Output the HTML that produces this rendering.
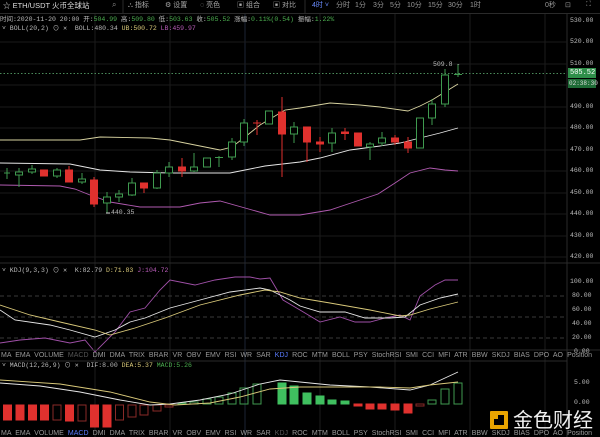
<!DOCTYPE html>
<html><head><meta charset="utf-8"><style>
html,body{margin:0;padding:0;background:#000;}
#w{position:relative;width:600px;height:437px;overflow:hidden;background:#000;font-family:"Liberation Sans","Noto Sans CJK SC",sans-serif;color:#bbb;}
.t{position:absolute;white-space:nowrap;font-size:7px;line-height:8px;}
.m{font-family:"Liberation Mono","Noto Sans CJK SC",monospace;font-size:6.5px;}
svg{position:absolute;left:0;top:0;}
</style></head><body><div id="w">
<svg width="600" height="437" viewBox="0 0 600 437">
<line x1="0" y1="13.5" x2="600" y2="13.5" stroke="#2a2a2a"/>
<line x1="123" y1="0" x2="123" y2="13" stroke="#2a2a2a"/>
<line x1="305" y1="0" x2="305" y2="13" stroke="#2a2a2a"/>
<g stroke="#1c1c1c">
<line x1="95" y1="14" x2="95" y2="437"/><line x1="170" y1="14" x2="170" y2="437"/>
<line x1="245" y1="14" x2="245" y2="437" stroke="#1c2433"/><line x1="320" y1="14" x2="320" y2="437"/>
<line x1="395" y1="14" x2="395" y2="437"/><line x1="470" y1="14" x2="470" y2="437"/>
<line x1="545" y1="14" x2="545" y2="437"/>
<line x1="567" y1="14" x2="567" y2="437" stroke="#2a2a2a"/>
</g>
<g stroke="#1a1a1a">
<line x1="0" y1="42" x2="567" y2="42"/><line x1="0" y1="64" x2="567" y2="64"/><line x1="0" y1="85" x2="567" y2="85"/>
<line x1="0" y1="107" x2="567" y2="107"/><line x1="0" y1="128" x2="567" y2="128"/><line x1="0" y1="150" x2="567" y2="150"/>
<line x1="0" y1="171" x2="567" y2="171"/><line x1="0" y1="193" x2="567" y2="193"/><line x1="0" y1="214" x2="567" y2="214"/>
<line x1="0" y1="236" x2="567" y2="236"/><line x1="0" y1="257" x2="567" y2="257"/>
</g>
<line x1="0" y1="263" x2="600" y2="263" stroke="#2a2a2a"/>
<line x1="0" y1="73.5" x2="567" y2="73.5" stroke="#4a8a5a" stroke-dasharray="1.5,2"/>
<polyline fill="none" stroke="#d8d3a0" stroke-width="0.9" points="0,140 80,140 100,137 150,138 170,140 200,146 220,150 232,147 245,137 260,125 285,110 300,108 330,103 360,105 380,107 408,111 420,106 432,100 445,92 458,84"/>
<polyline fill="none" stroke="#e6e6e6" stroke-width="0.9" points="0,163 70,164 100,170 130,172 170,173 230,173 245,170 265,166 300,162 320,158 350,150 380,146 400,143 420,138 440,133 458,128"/>
<polyline fill="none" stroke="#b05ab0" stroke-width="0.9" points="0,185 60,186 75,189 90,195 110,202 140,207 180,207 200,203 220,201 245,208 270,215 300,215 330,210 345,205 360,200 378,194 395,183 410,173 430,168 445,170 458,171"/>
<g stroke="#3f9a4f" stroke-width="1" fill="#000">
<line x1="7" y1="168" x2="7" y2="179"/><line x1="4" y1="173" x2="10" y2="173"/>
<line x1="19" y1="168" x2="19" y2="187"/><rect x="15.5" y="172" width="7" height="3"/>
<line x1="32" y1="165" x2="32" y2="174"/><rect x="28.5" y="169" width="7" height="3"/>
<line x1="57" y1="168" x2="57" y2="178"/><rect x="53.5" y="170" width="7" height="6"/>
<line x1="82" y1="173" x2="82" y2="184"/><rect x="78.5" y="179" width="7" height="3"/>
<line x1="107" y1="192" x2="107" y2="213"/><rect x="103.5" y="197" width="7" height="6"/>
<line x1="119" y1="190" x2="119" y2="202"/><rect x="115.5" y="194" width="7" height="3"/>
<line x1="132" y1="178" x2="132" y2="196"/><rect x="128.5" y="183" width="7" height="12"/>
<line x1="157" y1="170" x2="157" y2="189"/><rect x="153.5" y="173" width="7" height="15"/>
<line x1="169" y1="162" x2="169" y2="177"/><rect x="165.5" y="167" width="7" height="6"/>
<line x1="194" y1="153" x2="194" y2="172"/><rect x="190.5" y="167" width="7" height="4"/>
<rect x="203.5" y="158" width="7" height="9"/>
<line x1="219" y1="156" x2="219" y2="167"/><line x1="215" y1="157.5" x2="223" y2="157.5"/>
<line x1="232" y1="138" x2="232" y2="160"/><rect x="228.5" y="142" width="7" height="15"/>
<line x1="244" y1="119" x2="244" y2="146"/><rect x="240.5" y="123" width="7" height="19"/>
<rect x="265.5" y="111" width="7" height="13"/>
<line x1="294" y1="122" x2="294" y2="143"/><rect x="290.5" y="127" width="7" height="7"/>
<line x1="332" y1="128" x2="332" y2="152"/><rect x="328.5" y="133" width="7" height="10"/>
<line x1="370" y1="142" x2="370" y2="160"/><rect x="366.5" y="144" width="7" height="3"/>
<line x1="382" y1="132" x2="382" y2="146"/><rect x="378.5" y="138" width="7" height="5"/>
<rect x="416.5" y="118" width="7" height="30"/>
<line x1="432" y1="99" x2="432" y2="125"/><rect x="428.5" y="104" width="7" height="14"/>
<line x1="445" y1="69" x2="445" y2="107"/><rect x="441.5" y="75" width="7" height="29"/>
<line x1="458" y1="64" x2="458" y2="77"/><line x1="454" y1="74.5" x2="462" y2="74.5"/>
</g>
<g stroke="#e0312e" fill="#e0312e">
<rect x="40.5" y="170" width="7" height="6"/>
<line x1="69" y1="166" x2="69" y2="182"/><rect x="65.5" y="170" width="7" height="12"/>
<line x1="94" y1="177" x2="94" y2="207"/><rect x="90.5" y="180" width="7" height="24"/>
<line x1="144" y1="183" x2="144" y2="193"/><rect x="140.5" y="183" width="7" height="5"/>
<line x1="182" y1="158" x2="182" y2="177"/><rect x="178.5" y="167" width="7" height="4"/>
<line x1="257" y1="120" x2="257" y2="135"/><line x1="253" y1="123" x2="261" y2="123"/>
<line x1="282" y1="97" x2="282" y2="177"/><rect x="278.5" y="112" width="7" height="22"/>
<line x1="307" y1="127" x2="307" y2="162"/><rect x="303.5" y="127" width="7" height="15"/>
<line x1="320" y1="137" x2="320" y2="152"/><rect x="316.5" y="142" width="7" height="2"/>
<line x1="345" y1="128" x2="345" y2="140"/><rect x="341.5" y="132" width="7" height="1.5"/>
<rect x="354.5" y="133" width="7" height="13"/>
<line x1="395" y1="135" x2="395" y2="145"/><rect x="391.5" y="138" width="7" height="4"/>
<line x1="408" y1="137" x2="408" y2="153"/><rect x="404.5" y="142" width="7" height="6"/>
</g>
<line x1="106" y1="213" x2="110" y2="213" stroke="#ccc"/>
<g stroke="#3a3a3a" stroke-dasharray="4,3">
<line x1="0" y1="296" x2="567" y2="296"/><line x1="0" y1="317" x2="567" y2="317"/><line x1="0" y1="338" x2="567" y2="338"/>
</g>
<polyline fill="none" stroke="#a050a8" stroke-width="0.9" points="0,343 20,340 45,338 70,343 85,340 95,352 115,332 130,312 145,308 160,290 170,280 195,285 215,280 235,277 250,277 260,279 270,278 283,300 300,310 320,322 340,317 355,322 370,322 385,318 400,315 410,320 420,296 435,285 445,280 458,280"/>
<polyline fill="none" stroke="#e6e6e6" stroke-width="0.9" points="0,310 15,320 50,325 70,330 95,337 115,330 130,322 145,318 170,308 200,300 230,292 260,288 270,290 290,300 300,306 320,312 345,312 365,318 390,318 405,317 420,305 440,298 458,294"/>
<polyline fill="none" stroke="#d9c97a" stroke-width="0.9" points="0,305 30,315 60,322 95,330 110,335 135,328 165,318 200,305 240,295 265,290 280,292 300,298 330,303 370,310 400,316 410,315 430,309 458,302"/>
<line x1="0" y1="350" x2="600" y2="350" stroke="#2a2a2a"/>
<line x1="0" y1="361" x2="567" y2="361" stroke="#2a2a2a"/>
<g fill="#e0312e" stroke="#e0312e">
<rect x="3.5" y="405" width="8" height="15"/><rect x="28.5" y="405" width="8" height="15"/>
<rect x="16" y="405" width="8" height="15"/><rect x="40.5" y="405" width="8" height="15"/>
<rect x="65.5" y="405" width="8" height="16"/><rect x="90.5" y="405" width="8" height="22"/><rect x="103" y="405" width="8" height="22"/>
<rect x="354" y="404" width="8" height="2"/><rect x="366" y="404" width="8" height="5"/><rect x="378" y="404" width="8" height="5"/><rect x="391" y="404" width="8" height="6"/><rect x="404" y="404" width="8" height="9"/>
</g>
<g fill="none" stroke="#8a2a28">
<rect x="53" y="405" width="8" height="15"/><rect x="78" y="405" width="8" height="16"/>
<rect x="115.5" y="405" width="8" height="15"/><rect x="128" y="405" width="8" height="12"/><rect x="140" y="405" width="8" height="10"/><rect x="153" y="405" width="8" height="6"/><rect x="165" y="405" width="8" height="2"/>
<rect x="416" y="404" width="8" height="2"/>
</g>
<g fill="none" stroke="#3f9a4f">
<rect x="178" y="403" width="8" height="1"/><rect x="190" y="402" width="8" height="2"/><rect x="203" y="399" width="8" height="5"/><rect x="215" y="397" width="8" height="7"/><rect x="228" y="393" width="8" height="11"/><rect x="240" y="388" width="8" height="16"/><rect x="253" y="384" width="8" height="20"/>
<rect x="428" y="400" width="8" height="4"/><rect x="441" y="389" width="8" height="15"/><rect x="454" y="383" width="8" height="21"/>
</g>
<g fill="#3fbf5f" stroke="#3fbf5f">
<rect x="278" y="383" width="8" height="21"/><rect x="290" y="386" width="8" height="18"/><rect x="303" y="393" width="8" height="11"/><rect x="316" y="396" width="8" height="8"/><rect x="328" y="400" width="8" height="4"/><rect x="341" y="401" width="8" height="3"/>
</g>
<polyline fill="none" stroke="#e6e6e6" stroke-width="0.9" points="0,383 40,386 80,392 120,400 150,405 170,404 200,400 230,394 260,384 280,380 300,382 330,385 370,387 410,390 430,385 445,378 458,372"/>
<polyline fill="none" stroke="#d9c97a" stroke-width="0.9" points="0,380 60,384 110,392 150,402 175,405 210,403 240,397 270,389 300,387 340,387 380,387 410,388 430,385 458,382"/>
<rect x="568" y="68" width="28" height="10" fill="#2f8f4a"/>
<rect x="568" y="79" width="28" height="9" fill="#1e6b36"/>
<rect x="490" y="411" width="18" height="18" rx="1" fill="#e8a400"/>
<rect x="494" y="415" width="10" height="10" fill="#000"/>
<rect x="494" y="415" width="4" height="4" fill="#e8a400"/>
</svg>

<div class="t" style="left:3px;top:2px;color:#ddd;font-size:7.5px">☆ ETH/USDT 火币全球站</div>
<div class="t" style="left:112px;top:1px;color:#888;font-size:8px">⌕</div>
<div class="t" style="left:128px;top:2px;color:#aaa">⛬ 指标</div>
<div class="t" style="left:165px;top:2px;color:#aaa">⚙ 设置</div>
<div class="t" style="left:200px;top:2px;color:#aaa">◌ 亮色</div>
<div class="t" style="left:237px;top:2px;color:#aaa">▣ 组合</div>
<div class="t" style="left:273px;top:2px;color:#aaa">▣ 对比</div>
<div class="t" style="left:312px;top:2px;color:#6a8cff">4时 ˅</div>
<div class="t" style="left:336px;top:2px;color:#999">分时</div>
<div class="t" style="left:355px;top:2px;color:#999">1分</div>
<div class="t" style="left:373px;top:2px;color:#999">3分</div>
<div class="t" style="left:390px;top:2px;color:#999">5分</div>
<div class="t" style="left:407px;top:2px;color:#999">10分</div>
<div class="t" style="left:428px;top:2px;color:#999">15分</div>
<div class="t" style="left:448px;top:2px;color:#999">30分</div>
<div class="t" style="left:470px;top:2px;color:#999">1时</div>
<div class="t" style="left:545px;top:2px;color:#999">0秒</div>
<div class="t" style="left:565px;top:2px;color:#999">⊡</div>
<div class="t" style="left:586px;top:1px;color:#999">⛶</div>

<div class="t m" style="left:0;top:16px;color:#bbb">时间:2020-11-20 20:00 <span>开:</span><span style="color:#4caf50">504.99</span> 高:<span style="color:#4caf50">509.80</span> 低:<span style="color:#4caf50">503.63</span> 收:<span style="color:#4caf50">505.52</span> 涨幅:<span style="color:#4caf50">0.11%(0.54)</span> 振幅:<span style="color:#4caf50">1.22%</span></div>
<div class="t m" style="left:2px;top:25px;color:#bbb">˅ BOLL(20,2) ⊙ ✕ &nbsp;BOLL:480.34 <span style="color:#d9c97a">UB:500.72</span> <span style="color:#b85cb8">LB:459.97</span></div>

<div class="t m" style="left:433px;top:61px;color:#bbb">509.8 -</div>
<div class="t m" style="left:111px;top:209px;color:#bbb">440.35</div>

<div class="t m" style="left:570px;top:17px;color:#bbb">530.00</div>
<div class="t m" style="left:570px;top:38px;color:#bbb">520.00</div>
<div class="t m" style="left:570px;top:60px;color:#bbb">510.00</div>
<div class="t m" style="left:570px;top:69px;color:#fff;font-size:7px">505.52</div>
<div class="t m" style="left:569px;top:80px;color:#ddd;font-size:6px">02:38:30</div>
<div class="t m" style="left:570px;top:103px;color:#bbb">490.00</div>
<div class="t m" style="left:570px;top:124px;color:#bbb">480.00</div>
<div class="t m" style="left:570px;top:146px;color:#bbb">470.00</div>
<div class="t m" style="left:570px;top:167px;color:#bbb">460.00</div>
<div class="t m" style="left:570px;top:189px;color:#bbb">450.00</div>
<div class="t m" style="left:570px;top:210px;color:#bbb">440.00</div>
<div class="t m" style="left:570px;top:232px;color:#bbb">430.00</div>
<div class="t m" style="left:570px;top:253px;color:#bbb">420.00</div>

<div class="t m" style="left:2px;top:267px;color:#bbb">˅ KDJ(9,3,3) ⊙ ✕ &nbsp;K:82.79 <span style="color:#d9c97a">D:71.83</span> <span style="color:#b85cb8">J:104.72</span></div>
<div class="t m" style="left:570px;top:278px;color:#bbb">100.00</div>
<div class="t m" style="left:572px;top:292px;color:#bbb">80.00</div>
<div class="t m" style="left:572px;top:306px;color:#bbb">60.00</div>
<div class="t m" style="left:572px;top:320px;color:#bbb">40.00</div>
<div class="t m" style="left:572px;top:334px;color:#bbb">20.00</div>
<div class="t m" style="left:574px;top:348px;color:#bbb">0.00</div>

<div class="t m" style="left:2px;top:362px;color:#bbb">˅ MACD(12,26,9) ⊙ ✕ &nbsp;DIF:8.00 <span style="color:#d9c97a">DEA:5.37</span> <span style="color:#4caf50">MACD:5.26</span></div>
<div class="t m" style="left:574px;top:379px;color:#bbb">5.00</div>
<div class="t m" style="left:574px;top:399px;color:#bbb">0.00</div>

<div class="t" style="left:1px;top:352px;color:#999;word-spacing:2.2px">MA EMA VOLUME <span style="color:#555">MACD</span> DMI DMA TRIX BRAR VR OBV EMV RSI WR SAR <span style="color:#5a7cff">KDJ</span> ROC MTM BOLL PSY StochRSI SMI CCI MFI ATR BBW SKDJ BIAS DPO AO Position</div>
<div class="t" style="left:1px;top:430px;color:#999;word-spacing:2.2px">MA EMA VOLUME <span style="color:#5a7cff">MACD</span> DMI DMA TRIX BRAR VR OBV EMV RSI WR SAR <span style="color:#555">KDJ</span> ROC MTM BOLL PSY StochRSI SMI CCI MFI ATR BBW SKDJ BIAS DPO AO Position</div>

<div class="t" style="left:513px;top:407px;color:#f2f2f2;font-size:20px;line-height:24px;font-family:'Noto Sans CJK SC',sans-serif">金色财经</div>
</div></body></html>
